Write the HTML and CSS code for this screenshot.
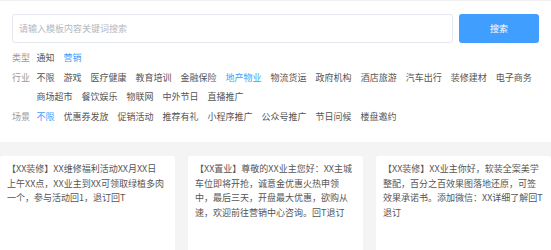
FILE: index.html
```html
<!DOCTYPE html>
<html lang="zh-CN">
<head>
<meta charset="utf-8">
<title>模板搜索</title>
<link rel="stylesheet" href="styles.css">
</head>
<body>
<div class="top-line"></div>
<div class="search">
  <input class="search-input" type="text" placeholder="请输入模板内容关键词搜索">
  <button class="search-btn" type="button">搜索</button>
</div>
<div class="filters">
  <div class="filter-row">
    <span class="label">类型</span>
    <div class="options">
      <span class="opt">通知</span>
      <span class="opt active">营销</span>
    </div>
  </div>
  <div class="filter-row">
    <span class="label">行业</span>
    <div class="options">
      <span class="opt">不限</span>
      <span class="opt">游戏</span>
      <span class="opt">医疗健康</span>
      <span class="opt">教育培训</span>
      <span class="opt">金融保险</span>
      <span class="opt active">地产物业</span>
      <span class="opt">物流货运</span>
      <span class="opt">政府机构</span>
      <span class="opt">酒店旅游</span>
      <span class="opt">汽车出行</span>
      <span class="opt">装修建材</span>
      <span class="opt">电子商务</span>
      <span class="opt">商场超市</span>
      <span class="opt">餐饮娱乐</span>
      <span class="opt">物联网</span>
      <span class="opt">中外节日</span>
      <span class="opt">直播推广</span>
    </div>
  </div>
  <div class="filter-row">
    <span class="label">场景</span>
    <div class="options">
      <span class="opt active">不限</span>
      <span class="opt">优惠券发放</span>
      <span class="opt">促销活动</span>
      <span class="opt">推荐有礼</span>
      <span class="opt">小程序推广</span>
      <span class="opt">公众号推广</span>
      <span class="opt">节日问候</span>
      <span class="opt">楼盘邀约</span>
    </div>
  </div>
</div>
<div class="cards">
  <div class="card">【XX装修】XX维修福利活动XX月XX日<br>上午XX点，XX业主到XX可领取绿植多肉<br>一个，参与活动回1，退订回T</div>
  <div class="card">【XX置业】尊敬的XX业主您好：XX主城<br>车位即将开抢，诚意金优惠火热申领<br>中，最后三天，开盘最大优惠，欲购从<br>速，欢迎前往营销中心咨询。回T退订</div>
  <div class="card">【XX装修】XX业主你好，软装全案美学<br>整配，百分之百效果图落地还原，可签<br>效果承诺书。添加微信：XX详细了解回T<br>退订</div>
</div>
</body>
</html>
```
FILE: styles.css
```css
html, body {
  margin: 0;
  padding: 0;
  background: #ffffff;
  height: 250px;
  overflow: hidden;
}
body {
  font-family: "Noto Sans CJK SC", "Liberation Sans", sans-serif;
  font-size: 9px;
  color: #555555;
}
.top-line {
  height: 1px;
  background: #f0f0f0;
}
.search {
  display: flex;
  gap: 6px;
  padding: 13px 12px 0 12px;
}
.search-input {
  flex: 1;
  height: 29px;
  box-sizing: border-box;
  border: 1px solid #e4e7ed;
  border-radius: 3px;
  padding: 0 6px;
  font-family: inherit;
  font-size: 9px;
  color: #555;
  outline: none;
}
.search-input::placeholder {
  color: #b4b8bf;
}
.search-btn {
  width: 80px;
  height: 29px;
  border: none;
  border-radius: 3px;
  background: #409eff;
  color: #ffffff;
  font-family: inherit;
  font-size: 9px;
  padding: 0;
}
.filters {
  margin-top: 5px;
  padding: 0 12px 0 12px;
}
.filter-row {
  display: flex;
  line-height: 19.6px;
}
.label {
  flex: none;
  width: 24.5px;
  color: #999999;
}
.options {
  display: flex;
  flex-wrap: wrap;
  column-gap: 9px;
}
.opt {
  color: #555555;
}
.opt.active {
  color: #409eff;
}
.cards {
  margin-top: 16px;
  background: #f4f4f4;
  padding-top: 14px;
  box-sizing: border-box;
  display: grid;
  grid-template-columns: repeat(3, 174.5px);
  column-gap: 13.5px;
  height: 108px;
}
.card {
  background: #ffffff;
  border-radius: 3px 3px 0 0;
  padding: 6px 7px;
  line-height: 14.4px;
  color: #555555;
  white-space: nowrap;
  overflow: hidden;
}
```
